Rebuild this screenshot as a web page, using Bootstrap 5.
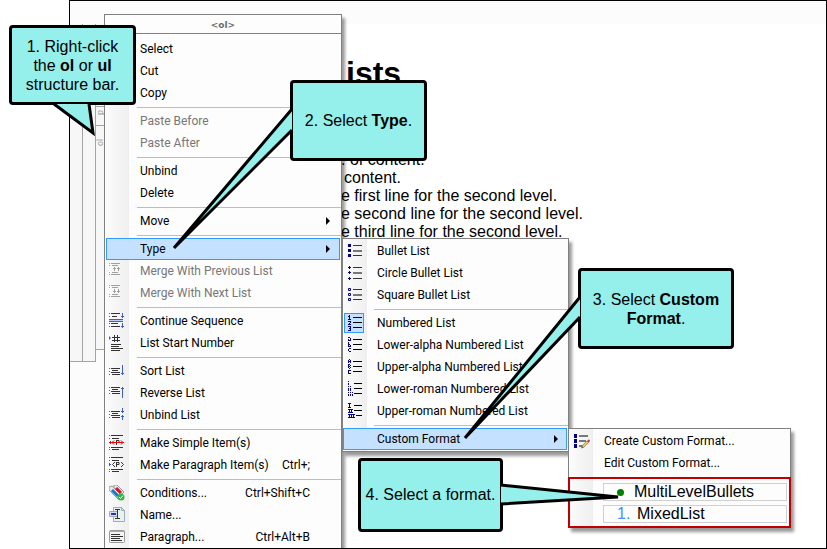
<!DOCTYPE html>
<html lang="en">
<head>
<meta charset="utf-8">
<meta name="viewport" content="width=device-width, initial-scale=1">
<title>Custom list formats</title>
<link href="https://cdn.jsdelivr.net/npm/bootstrap@5.3.0/dist/css/bootstrap.min.css" rel="stylesheet">
<style>
  body { font: 16px/18px "Liberation Sans", Arial, sans-serif; color: #000; background: #fff; }
  .stage { padding-left: 69px; }
  .editor { border: 1px solid #000; background: #fff; }
  .ruler { height: 23px; background: #fcfcfc; }
  .bars { width: 36px; background: #fcfcfc; }
  .bar { border: solid #a3a3a3; border-width: 0 1px 1px 0; background: #f7f7f7; }
  .bar-outer { width: 13px; height: 338px; }
  .bar-inner { width: 9px; height: 326px; border-right: 0; padding-top: 82px; font-size: 9px; line-height: 9px; color: #999; }
  .bar-cell { writing-mode: vertical-rl; transform: rotate(180deg); border-top: 1px solid #a3a3a3; text-align: right; }
  .cell-p { height: 20px; padding-bottom: 3px; border-bottom: 1px solid #a3a3a3; }
  .cell-gap { height: 8px; }
  .cell-ol { height: 5px; }
  .topic { padding: 31px 0 0 235px; }
  .topic h1 { font: bold 32px/36px "Liberation Sans", Arial, sans-serif; margin: 0 0 60px; padding-left: 5px; }
  .topic p { margin: 0; }
  .topic .indent { padding-left: 3px; }

  .menu { list-style: none; margin: 0; padding: 1px 0; border: 1px solid #808080; font: 12px/22px Roboto, "Segoe UI", sans-serif;
    background: linear-gradient(to right, #fcfcfc, #efefef 24px, #fdfdfd 24px); box-shadow: 3px 4px 3px rgba(0,0,0,.4); }
  .menu-main { left: 34px; top: 13px; width: 238px; padding: 0 0 24px; }
  .menu-sub { top: 0; width: 227px; }
  .menu-type { left: calc(100% + 1px); }
  .menu-format { left: 100%; width: 223px; }
  .menu-title { height: 19px; margin-bottom: 4px; border-bottom: 1px solid #808080; background: #fdfdfd; color: #6d6d6d;
    font: bold 9px/21px "DejaVu Sans", Verdana, sans-serif; }
  .entry { height: 22px; width: 100%; padding: 0 31px 0 4px; border: 0; background: none; color: #000; text-align: left; white-space: nowrap; }
  .entry:disabled { color: #777; }
  .entry-label { padding-left: 15px; }
  .menu-sub .entry { padding-left: 5px; }
  .menu-sub .entry-label { padding-left: 13px; }
  .menu-format .entry-label { padding-left: 14px; }
  .entry svg, .entry-blank { width: 16px; height: 16px; flex: none; }
  .entry.picked { width: auto; margin: 0 1px; border: 1px solid #3399ff; background: #c4e1ff; padding: 0 9px 0 2px; align-self: stretch; }
  .menu-sub .entry.picked { margin: 0 1px 0 0; padding: 0 8px 0 4px; }
  .entry.with-arrow { padding-right: 11px; }
  .arrow { border: solid transparent; border-width: 4px 0 4px 4px; border-left-color: #000; }
  .line { height: 1px; margin: 3px 0 2px 32px; background: #bdbdbd; }
  .menu-sub .line { margin-left: 31px; }
  .ticked { position: relative; }
  .ticked::before { content: ""; position: absolute; left: 1px; top: 1px; width: 20px; height: 20px; border: 1px solid #3399ff; background: #c4e1ff; }
  .ticked > * { position: relative; }
  .formats { margin: 3px -1px -2px; padding: 4px 2px 3px 33px; border: 2px solid #c00000; }
  .format { height: 18px; width: 100%; padding: 0 0 0 13px; border: 1px solid #d0d0d0; background: #fdfdfd; font: 16px/16px "Liberation Sans", Arial, sans-serif; color: #000; text-align: left; }
  .format + .format { margin-top: 4px; }
  .dot { width: 7px; height: 7px; margin-right: 10px; background: #008000; }
  .num { width: 20px; color: #3f8fff; }

  .note { background: #95efeb; border: 3px solid #000; border-radius: 4px; text-align: center; }
  .note svg { position: absolute; overflow: visible; width: 1px; height: 1px; left: 0; top: 0; fill: #95efeb; stroke: #000; stroke-width: 3; }
  .note-1 { left: 9px; top: 25px; width: 127px; height: 80px; line-height: 19px; }
  .note-2 { left: 290px; top: 80px; width: 137px; height: 81px; }
  .note-3 { left: 578px; top: 268px; width: 156px; height: 81px; line-height: 19px; }
  .note-4 { left: 358px; top: 458px; width: 145px; height: 74px; }
  .ink { stroke: #333; fill: none; } .blue { stroke: #3a5fcd; fill: none; } .navy { stroke: #00008b; fill: none; } .grey { stroke: #a0a0a0; fill: none; } .mid { stroke: #777; fill: none; } .red { stroke: #f00; fill: none; }
</style>
</head>
<body>
<svg class="d-none" shape-rendering="crispEdges">
  <symbol id="i-prev" viewBox="0 0 16 16"><path class="grey" d="M0 .5h1M2 .5h9M3 2.5h6M3 9.5h6M0 11.5h1M2 11.5h9M5.500 4v4M4 5.500h3M9.500 4v4M8 5.500h3M0 2.500h1M0 9.500h1"/></symbol>
  <symbol id="i-next" viewBox="0 0 16 16"><path class="grey" d="M0 .5h1M2 .5h9M3 2.5h6M3 9.5h6M0 11.5h1M2 11.5h9M5.500 4v4M4 6.500h3M9.500 4v4M8 6.500h3M0 2.500h1M0 9.500h1"/></symbol>
  <symbol id="i-cont" viewBox="0 0 16 16"><path class="ink" d="M2 .5h9M3 3.5h5M2 10.500h7M2 13.500h9"/><path class="blue" d="M0 .5h1M0 3.500h1M0 10.500h1M0 13.500h1M13.500 0v5M12 3.500h3M13.500 10v5M12 13.500h3M0 6.500h14M0 8.500h14"/><path stroke="#bcd0ff" d="M0 7.500h14"/></symbol>
  <symbol id="i-start" viewBox="0 0 16 16"><path class="ink" d="M5.500 0v7M8.500 0v7M3 2.500h8M3 5.500h8M2 9.500h10M2 11.500h8M2 13.500h12M2 15.500h9"/><path fill="#3a5fcd" d="M0 1v4l2-2z"/></symbol>
  <symbol id="i-sort" viewBox="0 0 16 16"><path class="ink" d="M2 5.500h9M3 7.500h6M2 9.500h9M3 11.500h8"/><path class="blue" d="M0 5.500h1M0 8.500h1M0 11.500h1M13.500 2v10M12 10.500h3"/></symbol>
  <symbol id="i-rev" viewBox="0 0 16 16"><path class="ink" d="M2 2.500h9M3 4.500h6M2 6.500h9M3 8.500h8"/><path class="blue" d="M0 2.500h1M0 5.500h1M0 8.500h1M13.500 2v11M12 3.500h3"/></symbol>
  <symbol id="i-unb" viewBox="0 0 16 16"><path class="ink" d="M2 4.500h9M3 6.500h6M2 8.500h9M3 10.500h8"/><path class="blue" d="M0 4.500h1M0 7.500h1M0 10.500h1M13.500 1v5M12 4.500h3M13.500 8v5M12 9.500h3"/></symbol>
  <symbol id="i-simple" viewBox="0 0 16 16"><path class="ink" d="M2 .5h12M3 3.500h7M2 12.500h12M3 14.500h7M5 5.500l-2 2 2 2M12 5.500l2 2-2 2M7.500 5v5M7 5.500h3v2H7"/><path class="blue" d="M0 .5h1M0 3.500h1M0 12.500h1M0 14.500h1"/><path class="red" d="M0 7.500h15M1.500 6v3"/></symbol>
  <symbol id="i-para" viewBox="0 0 16 16"><path class="ink" d="M2 .5h12M3 3.500h7M2 12.500h12M3 14.500h7M6 5l-2.500 2.500 2.500 2.500M12 5l2.500 2.500-2.500 2.500M7.500 5v5M7 5.500h3v2H7"/><path class="blue" d="M0 .5h1M0 3.500h1M0 12.500h1M0 14.500h1M0 7.500h2M.5 6v3"/></symbol>
  <symbol id="i-cond" viewBox="0 0 16 16"><g shape-rendering="auto"><path d="M0 2l3-1 10 9-4 4L0 5z" fill="#e8e8e8" stroke="#999"/><path d="M5 0l3 0 7 7-3 3-7-7z" fill="#eee" stroke="#999"/><path d="M3 5l6 6" stroke="#1478c8" stroke-width="3"/><path d="M7 3l5 5" stroke="#e01020" stroke-width="3"/><circle cx="12" cy="12" r="3.500" fill="#2eb842"/><path d="M10 12l1.500 1.500L14 10.500" stroke="#fff" fill="none"/></g></symbol>
  <symbol id="i-name" viewBox="0 0 16 16"><path d="M4.500.5h8l3 3v11h-11z" fill="#e9f1f3" stroke="#9ab0b6"/><path d="M12.500 0v3.500H16" stroke="#9ab0b6" fill="none"/><path d="M.5 4.500h8v5h-8z" fill="#d8dfee" stroke="#a0a8b8"/><path d="M2 6h5v2H2z" fill="#2038a8"/><path class="ink" d="M6 2.500h5M8.500 2v10M6 11.500h5"/></symbol>
  <symbol id="i-par" viewBox="0 0 16 16"><rect x=".5" y="1.500" width="15" height="12" rx="1" fill="#f4f4f4" stroke="#999"/><path d="M0 2.500h16" stroke="#aaa"/><path class="ink" d="M2 5.500h9M2 7.500h12M2 9.500h9M2 11.500h11"/></symbol>

  <symbol id="i-bul" viewBox="0 0 16 16"><path fill="#00008b" d="M0 1h3v3H0zM0 6h3v3H0zM0 11h3v3H0z"/><path class="ink" d="M5 2.500h9M5 12.500h9"/><path class="mid" stroke-width="2" d="M5 8h9"/></symbol>
  <symbol id="i-circ" viewBox="0 0 16 16"><path class="navy" d="M0 2.500h3M1.500 1v3M0 7.500h3M1.500 6v3M0 13.500h3M1.500 12v3"/><path class="ink" d="M5 2.500h9M5 13.500h9"/><path class="mid" stroke-width="2" d="M5 8h9"/></symbol>
  <symbol id="i-sq" viewBox="0 0 16 16"><path class="navy" d="M.5 1.500h2v2h-2zM.5 6.500h2v2h-2zM.5 11.500h2v2h-2z"/><path class="ink" d="M5 2.500h9M5 12.500h9"/><path class="mid" stroke-width="2" d="M5 8h9"/></symbol>
  <symbol id="i-num" viewBox="0 0 16 16"><path class="navy" d="M1.500 0v4M0 1.500h1M0 4.500h3M0 6.500h2M2.500 6v2M1 8.500h1M0 9.500h3M0 11.500h3M2.500 12v3M1 13.500h1M0 15.500h3"/><path stroke="#000" d="M5 2.500h9M5 7.500h9M5 12.500h9"/></symbol>
  <symbol id="i-la" viewBox="0 0 16 16"><path class="navy" d="M0 .5h2M2.500 1v3M0 3.500h2M.5 2v1M.5 5v5M1 7.500h1M2.500 8v2M1 9.500h1M1 11.500h2M.5 12v2M1 14.500h2"/><path stroke="#000" d="M5 2.500h9M5 7.500h9M5 12.500h9"/></symbol>
  <symbol id="i-ua" viewBox="0 0 16 16"><path class="navy" d="M1 .5h1M.5 1v3M2.500 1v3M1 2.500h1M.5 5v4M1 5.500h1M1 7.500h1M2.500 6v1M2.500 8v1M1 9.500h1M1 11.500h2M.5 11v4M1 14.500h2"/><path stroke="#000" d="M5 2.500h9M5 7.500h9M5 12.500h9"/></symbol>
  <symbol id="i-lr" viewBox="0 0 16 16"><path class="navy" d="M.5 0v1M.5 2v2M.5 5v1M.5 7v3M2.500 5v1M2.500 7v3M.5 11v1M.5 13v2M2.500 11v1M2.500 13v2M4.500 11v1M4.500 13v2"/><path stroke="#000" d="M6 2.500h8M6 7.500h8M6 12.500h8"/></symbol>
  <symbol id="i-ur" viewBox="0 0 16 16"><path class="navy" d="M0 .5h3M1.500 1v3M0 4.500h3M0 6.500h5M1.500 6v4M3.500 6v4M0 9.500h5M0 11.500h7M1.500 11v4M3.500 11v4M5.500 11v4M0 14.500h7"/><path stroke="#000" d="M6 2.500h8M6 7.500h8M8 12.500h6"/></symbol>
  <symbol id="i-new" viewBox="0 0 16 16"><path fill="#00008b" d="M0 1h3v4H0zM0 6h3v4H0zM0 11h3v4H0z"/><path class="mid" stroke-width="2" d="M5 3h9M5 8h7M5 13h4"/><g shape-rendering="auto"><path d="M8.500 14L14 8.500" stroke="#8a7a40" stroke-width="2.500"/><path d="M8.500 14L14 8.500" stroke="#f0d878" stroke-width="1.500"/><path d="M13.500 9L15.500 7" stroke="#d04040" stroke-width="2"/><path d="M7 15.500l1-2.500 1.500 1.500z" fill="#555"/></g></symbol>
</svg>

<div class="stage position-relative vh-100 overflow-hidden">
  <main class="editor position-relative h-100 overflow-hidden d-flex flex-column">
    <div class="ruler flex-shrink-0"></div>
    <div class="d-flex flex-grow-1">
      <div class="bars d-flex align-items-start flex-shrink-0">
        <div class="bar bar-outer"></div>
        <div class="bar bar-outer"></div>
        <div class="bar bar-inner">
          <div class="bar-cell cell-p">p</div>
          <div class="bar-cell cell-gap"></div>
          <div class="bar-cell cell-ol"></div>
          <div class="bar-cell border-0">ol</div>
        </div>
      </div>
      <article class="topic flex-grow-1 text-nowrap">
        <h1>ists</h1>
        <p>. of content.</p>
        <p class="indent">content.</p>
        <p>e first line for the second level.</p>
        <p>e second line for the second level.</p>
        <p>e third line for the second level.</p>
      </article>
    </div>

    <ul class="menu menu-main position-absolute">
      <li class="menu-title text-center">&lt;ol&gt;</li>
      <li><button class="entry d-flex align-items-center"><span class="entry-blank"></span><span class="entry-label">Select</span></button></li>
      <li><button class="entry d-flex align-items-center"><span class="entry-blank"></span><span class="entry-label">Cut</span></button></li>
      <li><button class="entry d-flex align-items-center"><span class="entry-blank"></span><span class="entry-label">Copy</span></button></li>
      <li class="line"></li>
      <li><button class="entry d-flex align-items-center" disabled><span class="entry-blank"></span><span class="entry-label">Paste Before</span></button></li>
      <li><button class="entry d-flex align-items-center" disabled><span class="entry-blank"></span><span class="entry-label">Paste After</span></button></li>
      <li class="line"></li>
      <li><button class="entry d-flex align-items-center"><span class="entry-blank"></span><span class="entry-label">Unbind</span></button></li>
      <li><button class="entry d-flex align-items-center"><span class="entry-blank"></span><span class="entry-label">Delete</span></button></li>
      <li class="line"></li>
      <li><button class="entry with-arrow d-flex align-items-center"><span class="entry-blank"></span><span class="entry-label">Move</span><span class="arrow ms-auto"></span></button></li>
      <li class="line"></li>
      <li class="position-relative d-flex flex-column">
        <button class="entry picked d-flex align-items-center"><span class="entry-blank"></span><span class="entry-label">Type</span><span class="arrow ms-auto"></span></button>
        <ul class="menu menu-sub menu-type position-absolute">
          <li><button class="entry d-flex align-items-center"><svg><use href="#i-bul"/></svg><span class="entry-label">Bullet List</span></button></li>
          <li><button class="entry d-flex align-items-center"><svg><use href="#i-circ"/></svg><span class="entry-label">Circle Bullet List</span></button></li>
          <li><button class="entry d-flex align-items-center"><svg><use href="#i-sq"/></svg><span class="entry-label">Square Bullet List</span></button></li>
          <li class="line"></li>
          <li><button class="entry ticked d-flex align-items-center"><svg><use href="#i-num"/></svg><span class="entry-label">Numbered List</span></button></li>
          <li><button class="entry d-flex align-items-center"><svg><use href="#i-la"/></svg><span class="entry-label">Lower-alpha Numbered List</span></button></li>
          <li><button class="entry d-flex align-items-center"><svg><use href="#i-ua"/></svg><span class="entry-label">Upper-alpha Numbered List</span></button></li>
          <li><button class="entry d-flex align-items-center"><svg><use href="#i-lr"/></svg><span class="entry-label">Lower-roman Numbered List</span></button></li>
          <li><button class="entry d-flex align-items-center"><svg><use href="#i-ur"/></svg><span class="entry-label">Upper-roman Numbered List</span></button></li>
          <li class="line"></li>
          <li class="position-relative d-flex flex-column">
            <button class="entry picked d-flex align-items-center"><span class="entry-blank"></span><span class="entry-label">Custom Format</span><span class="arrow ms-auto"></span></button>
            <ul class="menu menu-sub menu-format position-absolute">
              <li><button class="entry d-flex align-items-center"><svg><use href="#i-new"/></svg><span class="entry-label">Create Custom Format...</span></button></li>
              <li><button class="entry d-flex align-items-center"><span class="entry-blank"></span><span class="entry-label">Edit Custom Format...</span></button></li>
              <li class="formats">
                <button class="format d-flex align-items-center"><span class="dot rounded-circle"></span>MultiLevelBullets</button>
                <button class="format d-flex align-items-center"><span class="num">1.</span>MixedList</button>
              </li>
            </ul>
          </li>
        </ul>
      </li>
      <li><button class="entry d-flex align-items-center" disabled><svg><use href="#i-prev"/></svg><span class="entry-label">Merge With Previous List</span></button></li>
      <li><button class="entry d-flex align-items-center" disabled><svg><use href="#i-next"/></svg><span class="entry-label">Merge With Next List</span></button></li>
      <li class="line"></li>
      <li><button class="entry d-flex align-items-center"><svg><use href="#i-cont"/></svg><span class="entry-label">Continue Sequence</span></button></li>
      <li><button class="entry d-flex align-items-center"><svg><use href="#i-start"/></svg><span class="entry-label">List Start Number</span></button></li>
      <li class="line"></li>
      <li><button class="entry d-flex align-items-center"><svg><use href="#i-sort"/></svg><span class="entry-label">Sort List</span></button></li>
      <li><button class="entry d-flex align-items-center"><svg><use href="#i-rev"/></svg><span class="entry-label">Reverse List</span></button></li>
      <li><button class="entry d-flex align-items-center"><svg><use href="#i-unb"/></svg><span class="entry-label">Unbind List</span></button></li>
      <li class="line"></li>
      <li><button class="entry d-flex align-items-center"><svg><use href="#i-simple"/></svg><span class="entry-label">Make Simple Item(s)</span></button></li>
      <li><button class="entry d-flex align-items-center"><svg><use href="#i-para"/></svg><span class="entry-label">Make Paragraph Item(s)</span><span class="ms-auto">Ctrl+;</span></button></li>
      <li class="line"></li>
      <li><button class="entry d-flex align-items-center"><svg><use href="#i-cond"/></svg><span class="entry-label">Conditions...</span><span class="ms-auto">Ctrl+Shift+C</span></button></li>
      <li><button class="entry d-flex align-items-center"><svg><use href="#i-name"/></svg><span class="entry-label">Name...</span></button></li>
      <li><button class="entry d-flex align-items-center"><svg><use href="#i-par"/></svg><span class="entry-label">Paragraph...</span><span class="ms-auto">Ctrl+Alt+B</span></button></li>
    </ul>
  </main>

  <div class="note note-1 position-absolute d-flex align-items-center justify-content-center">
    <svg><path d="M42 76L81 105 77 76" /></svg>
    <div>1. Right-click<br>the <b>ol</b> or <b>ul</b><br>structure bar.</div>
  </div>
  <div class="note note-2 position-absolute d-flex align-items-center justify-content-center">
    <svg><path d="M-1 26L-119 165 -1 47"/></svg>
    <div>2. Select <b>Type</b>.</div>
  </div>
  <div class="note note-3 position-absolute d-flex align-items-center justify-content-center">
    <svg><path d="M-1 26L-116 167 -1 46"/></svg>
    <div>3. Select <b>Custom</b><br><b>Format</b>.</div>
  </div>
  <div class="note note-4 position-absolute d-flex align-items-center justify-content-center">
    <svg><path d="M140 24L257 36 140 43"/></svg>
    <div>4. Select a format.</div>
  </div>
</div>
<script src="https://cdn.jsdelivr.net/npm/bootstrap@5.3.0/dist/js/bootstrap.bundle.min.js"></script>
</body>
</html>
